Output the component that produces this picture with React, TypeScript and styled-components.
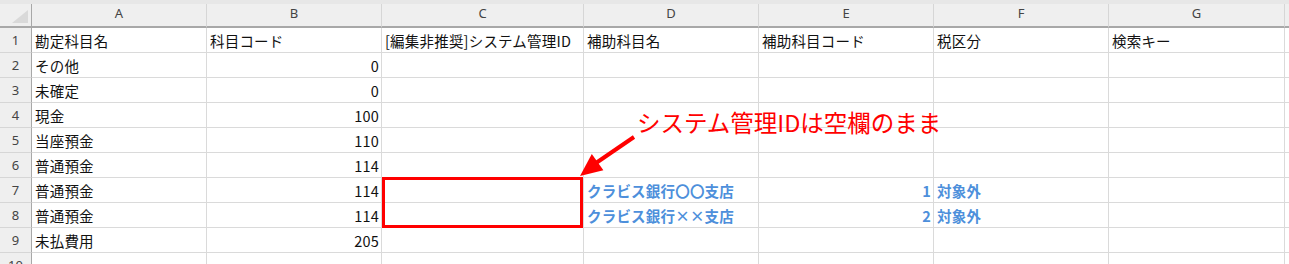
import React from 'react';
import styled, { createGlobalStyle } from 'styled-components';

const GlobalStyle = createGlobalStyle`
  html, body {
    margin: 0;
    padding: 0;
    background: #ffffff;
    overflow: hidden;
  }
`;

const COLS = ['A', 'B', 'C', 'D', 'E', 'F', 'G', ''];

type Row = {
  cells: string[];
  right?: number[];
  blue?: boolean;
};

const rows: Row[] = [
  { cells: ['勘定科目名', '科目コード', '[編集非推奨]システム管理ID', '補助科目名', '補助科目コード', '税区分', '検索キー'] },
  { cells: ['その他', '0'], right: [1] },
  { cells: ['未確定', '0'], right: [1] },
  { cells: ['現金', '100'], right: [1] },
  { cells: ['当座預金', '110'], right: [1] },
  { cells: ['普通預金', '114'], right: [1] },
  { cells: ['普通預金', '114', '', 'クラビス銀行〇〇支店', '1', '対象外'], right: [1, 4], blue: true },
  { cells: ['普通預金', '114', '', 'クラビス銀行××支店', '2', '対象外'], right: [1, 4], blue: true },
  { cells: ['未払費用', '205'], right: [1] },
  { cells: [] },
];

const Page = styled.div`
  position: relative;
  width: 1289px;
  height: 264px;
  overflow: hidden;
  background: #ffffff;
`;

const TopStrip = styled.div`
  height: 4px;
  background: #e7e7e7;
`;

const Sheet = styled.div`
  display: grid;
  grid-template-columns: 32px 175px 175px 202px 175px 175px 175px 176px 1fr;
  grid-auto-rows: 25px;
  grid-template-rows: 24px;
`;

const Corner = styled.div`
  position: relative;
  background: #efefef;
  border-right: 1px solid #a8a8a8;
  border-bottom: 2px solid #a8a8a8;
  box-sizing: border-box;

  &::after {
    content: '';
    position: absolute;
    right: 3px;
    bottom: 3px;
    width: 0;
    height: 0;
    border-left: 16px solid transparent;
    border-bottom: 13px solid #d9d9d9;
  }
`;

const ColHead = styled.div`
  display: flex;
  align-items: center;
  justify-content: center;
  padding-bottom: 5px;
  box-sizing: border-box;
  background: #efefef;
  border-right: 1px solid #d6d6d6;
  border-bottom: 2px solid #a8a8a8;
  font-family: 'Noto Sans', 'Liberation Sans', sans-serif;
  font-size: 13px;
  color: #444444;
`;

const RowHead = styled.div`
  display: flex;
  align-items: center;
  justify-content: center;
  box-sizing: border-box;
  background: #efefef;
  border-right: 1px solid #a8a8a8;
  border-bottom: 1px solid #d6d6d6;
  font-family: 'Noto Sans', 'Liberation Sans', sans-serif;
  font-size: 13px;
  color: #444444;
`;

const Cell = styled.div<{ $right?: boolean; $blue?: boolean }>`
  display: flex;
  align-items: center;
  justify-content: ${(p) => (p.$right ? 'flex-end' : 'flex-start')};
  padding: 1px ${(p) => (p.$right ? '2px' : '3px')} 0 3px;
  box-sizing: border-box;
  border-right: 1px solid #dadada;
  border-bottom: 1px solid #dadada;
  white-space: nowrap;
  overflow: hidden;
  font-family: 'Noto Sans CJK JP', 'Noto Sans', sans-serif;
  font-size: 14.5px;
  letter-spacing: 0.2px;
  font-weight: ${(p) => (p.$blue ? 700 : 400)};
  color: ${(p) => (p.$blue ? '#4d8fdb' : '#111111')};
`;

const Highlight = styled.div`
  position: absolute;
  left: 382px;
  top: 177px;
  width: 201px;
  height: 51px;
  box-sizing: border-box;
  border: 3px solid #ff0000;
`;

const Arrow = styled.svg`
  position: absolute;
  left: 570px;
  top: 130px;
`;

const Note = styled.div`
  position: absolute;
  left: 637px;
  top: 107px;
  font-family: 'Noto Sans CJK JP', 'Noto Sans', sans-serif;
  font-size: 23.5px;
  line-height: 30px;
  color: #ff0000;
  white-space: nowrap;
`;

const App: React.FC = () => {
  return (
    <Page>
      <GlobalStyle />
      <TopStrip />
      <Sheet>
        <Corner />
        {COLS.map((c, i) => (
          <ColHead key={i}>{c}</ColHead>
        ))}
        {rows.map((row, r) => (
          <React.Fragment key={r}>
            <RowHead>{r + 1}</RowHead>
            {COLS.map((_, c) => (
              <Cell
                key={c}
                $right={row.right?.includes(c)}
                $blue={row.blue && c >= 3}
              >
                {row.cells[c] ?? ''}
              </Cell>
            ))}
          </React.Fragment>
        ))}
      </Sheet>
      <Highlight />
      <Arrow width="80" height="55" viewBox="0 0 80 55">
        <line x1="64" y1="7" x2="26" y2="33" stroke="#ff0000" strokeWidth="4" />
        <polygon points="10,46 21.8,23.9 33.4,40.3" fill="#ff0000" />
      </Arrow>
      <Note>システム管理IDは空欄のまま</Note>
    </Page>
  );
};

export default App;
